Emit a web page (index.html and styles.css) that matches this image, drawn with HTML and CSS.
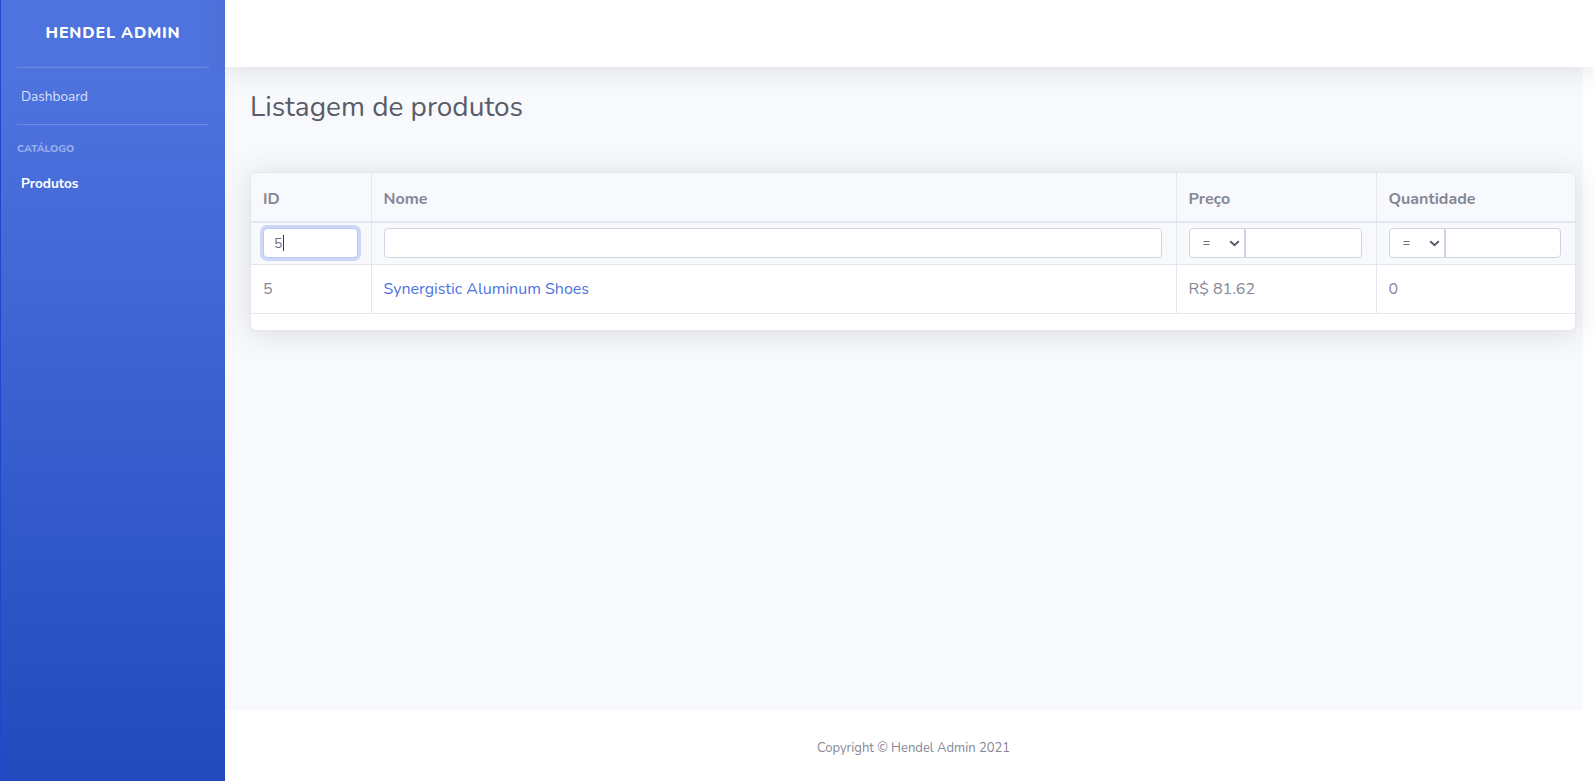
FILE: index.html
```html
<!DOCTYPE html>
<html lang="pt-BR">
<head>
<meta charset="utf-8">
<title>Hendel Admin - Produtos</title>
<link rel="stylesheet" href="styles.css">
</head>
<body>
<div class="wrapper">
  <aside class="sidebar">
    <div class="brand">HENDEL ADMIN</div>
    <div class="divider"></div>
    <a class="nav-link dash" href="#">Dashboard</a>
    <div class="divider"></div>
    <div class="heading">CATÁLOGO</div>
    <a class="nav-link active" href="#">Produtos</a>
  </aside>
  <div class="main">
    <header class="topbar"></header>
    <div class="content">
      <h1 class="title">Listagem de produtos</h1>
      <div class="card">
        <table class="table">
          <colgroup>
            <col class="c-id"><col class="c-nome"><col class="c-preco"><col class="c-qtd">
          </colgroup>
          <thead>
            <tr class="head-row">
              <th>ID</th><th>Nome</th><th>Preço</th><th>Quantidade</th>
            </tr>
            <tr class="filter-row">
              <td><div class="input focus"><span>5</span><span class="caret"></span></div></td>
              <td><input class="input" type="text"></td>
              <td>
                <div class="combo">
                  <div class="select"><span>=</span><svg width="11" height="7" viewBox="0 0 11 7"><path d="M1.2 1.2 L5.5 5.2 L9.8 1.2" fill="none" stroke="#5a5c69" stroke-width="2"/></svg></div>
                  <input class="input grow" type="text">
                </div>
              </td>
              <td>
                <div class="combo">
                  <div class="select"><span>=</span><svg width="11" height="7" viewBox="0 0 11 7"><path d="M1.2 1.2 L5.5 5.2 L9.8 1.2" fill="none" stroke="#5a5c69" stroke-width="2"/></svg></div>
                  <input class="input grow" type="text">
                </div>
              </td>
            </tr>
          </thead>
          <tbody>
            <tr class="data-row">
              <td>5</td>
              <td><a class="link" href="#">Synergistic Aluminum Shoes</a></td>
              <td>R$ 81.62</td>
              <td>0</td>
            </tr>
          </tbody>
        </table>
      </div>
    </div>
    <footer class="footer">Copyright © Hendel Admin 2021</footer>
  </div>
</div>
</body>
</html>
```

FILE: styles.css
```css
* { box-sizing: border-box; }
html, body { margin: 0; padding: 0; }
body {
  font-family: "Nunito", "Lato", "Open Sans", sans-serif;
  background: #fff;
  color: #858796;
  width: 1594px;
  height: 781px;
  overflow: hidden;
}
.wrapper { display: flex; height: 781px; }
.sidebar {
  width: 225px;
  flex: 0 0 225px;
  background: linear-gradient(180deg, #4e73df 10%, #224abe 100%);
  border-left: 1px solid #1d48c8;
  display: flex;
  flex-direction: column;
}
.brand {
  height: 67px;
  flex: 0 0 67px;
  display: flex;
  align-items: center;
  justify-content: center;
  color: #fff;
  font-weight: 800;
  font-size: 16px;
  letter-spacing: 0.8px;
  padding-bottom: 2px;
}
.divider {
  height: 1px;
  flex: 0 0 1px;
  margin: 0 16px;
  background: rgba(255,255,255,.18);
}
.nav-link {
  display: block;
  color: rgba(255,255,255,.8);
  text-decoration: none;
  font-size: 13.6px;
  padding: 0 20px;
}
.dash { height: 56px; line-height: 58px; }
.heading {
  color: rgba(255,255,255,.45);
  font-size: 10.4px;
  font-weight: 800;
  padding: 16px 16px 0;
  line-height: 16px;
}
.nav-link.active {
  color: #fff;
  font-weight: 700;
  padding-top: 15px;
  line-height: 24px;
}
.main {
  flex: 1;
  display: flex;
  flex-direction: column;
  min-width: 0;
}
.topbar {
  height: 67px;
  flex: 0 0 67px;
  background: #fff;
  position: relative;
  z-index: 2;
  box-shadow: 0 0.15rem 1.75rem 0 rgba(58,59,69,.15);
}
.content {
  flex: 1;
  background: #f8f9fc;
  margin-right: 11px;
  padding: 24px 7px 0 25px;
}
.title {
  margin: 0 0 48px;
  font-size: 28px;
  font-weight: 400;
  line-height: 33px;
  color: #5a5c69;
}
.card {
  background: #fff;
  border: 1px solid #e3e6f0;
  border-radius: 5.6px;
  box-shadow: 0 0.15rem 1.75rem 0 rgba(58,59,69,.15);
  padding-bottom: 16px;
  overflow: hidden;
}
.table {
  width: 100%;
  border-collapse: collapse;
  table-layout: fixed;
}
.c-id { width: 120px; }
.c-preco { width: 200px; }
.c-qtd { width: 199px; }
.table th, .table td {
  border-right: 1px solid #e3e6f0;
  border-bottom: 1px solid #e3e6f0;
  text-align: left;
  vertical-align: middle;
}
.table th:last-child, .table td:last-child { border-right: none; }
.head-row th {
  background: #f8f9fc;
  font-weight: 700;
  font-size: 16px;
  color: #858796;
  height: 49px;
  padding: 4px 12px 0;
  border-bottom-width: 2px;
}
.filter-row td {
  background: #f8f9fc;
  height: 42px;
  padding: 0 14px 0 12px;
}
.input {
  display: block;
  width: 100%;
  min-width: 0;
  height: 30px;
  border: 1px solid #d1d3e2;
  border-radius: 4px;
  background: #fff;
  font-family: inherit;
  font-size: 14px;
  color: #6e707e;
  padding: 0 9px;
  outline: none;
}
.input.focus {
  display: flex;
  align-items: center;
  border-color: #bac8f3;
  box-shadow: 0 0 0 3px rgba(78,115,223,.25);
  width: 95px;
  padding-left: 10px;
}
.caret {
  width: 1px;
  height: 16px;
  background: #3a3b45;
  margin-left: 1px;
}
.combo { display: flex; min-width: 0; }
.select {
  width: 56px;
  flex: 0 0 56px;
  height: 30px;
  border: 1px solid #d1d3e2;
  border-radius: 4px 0 0 4px;
  background: #fff;
  display: flex;
  align-items: center;
  justify-content: space-between;
  padding: 0 4px 0 13px;
  font-size: 13px;
  color: #6e707e;
}
.input.grow {
  flex: 1 1 0;
  width: 0;
  border-radius: 0 4px 4px 0;
}
.data-row td {
  height: 49px;
  padding: 0 12px;
  font-size: 16px;
  color: #858796;
}
.link { color: #4e73df; text-decoration: none; }
.footer {
  height: 71px;
  flex: 0 0 71px;
  display: flex;
  align-items: center;
  justify-content: center;
  font-size: 13px;
  color: #858796;
  background: #fff;
  padding: 4px 0 0 8px;
}
```
